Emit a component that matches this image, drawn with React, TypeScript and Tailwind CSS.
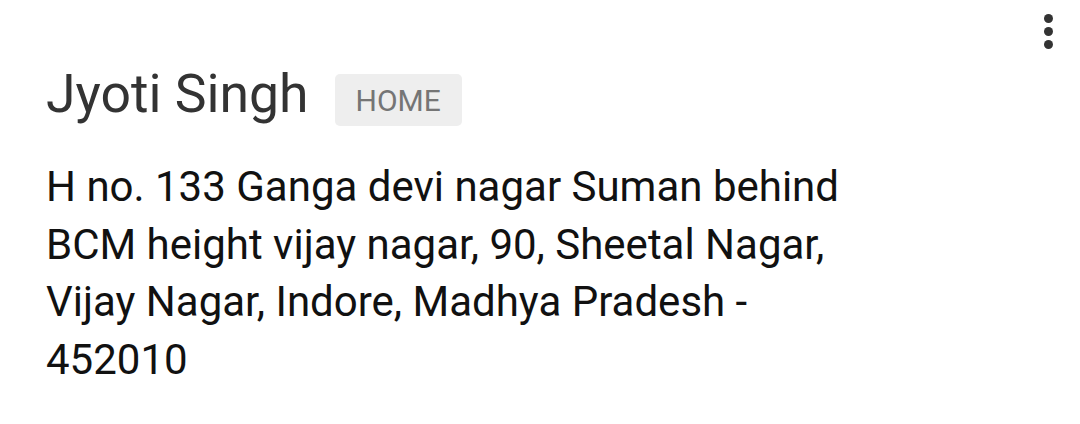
import React from "react";

export default function App() {
  return (
    <div className="w-[1080px] h-[424px] bg-white relative" style={{ fontFamily: "Roboto, sans-serif" }}>
      <div className="absolute right-[27px] top-[14px] flex flex-col gap-[4px]">
        <div className="w-[9px] h-[9px] rounded-full bg-[#333]" />
        <div className="w-[9px] h-[9px] rounded-full bg-[#333]" />
        <div className="w-[9px] h-[9px] rounded-full bg-[#333]" />
      </div>
      <div className="pl-[46px] pt-[62px]">
        <div className="flex items-start gap-[26px]">
          <div className="text-[53.5px] leading-[64px] text-[#333]">Jyoti Singh</div>
          <div className="mt-[12px] bg-[#eeeeee] rounded-[5px] px-[21px] h-[52px] flex items-center text-[30px] text-[#757575]">HOME</div>
        </div>
        <div className="mt-[32px] text-[42px] leading-[57.5px] text-[#111] w-[820px]">
          H no. 133 Ganga devi nagar Suman behind BCM height vijay nagar, 90, Sheetal Nagar, Vijay Nagar, Indore, Madhya Pradesh - 452010
        </div>
      </div>
    </div>
  );
}
